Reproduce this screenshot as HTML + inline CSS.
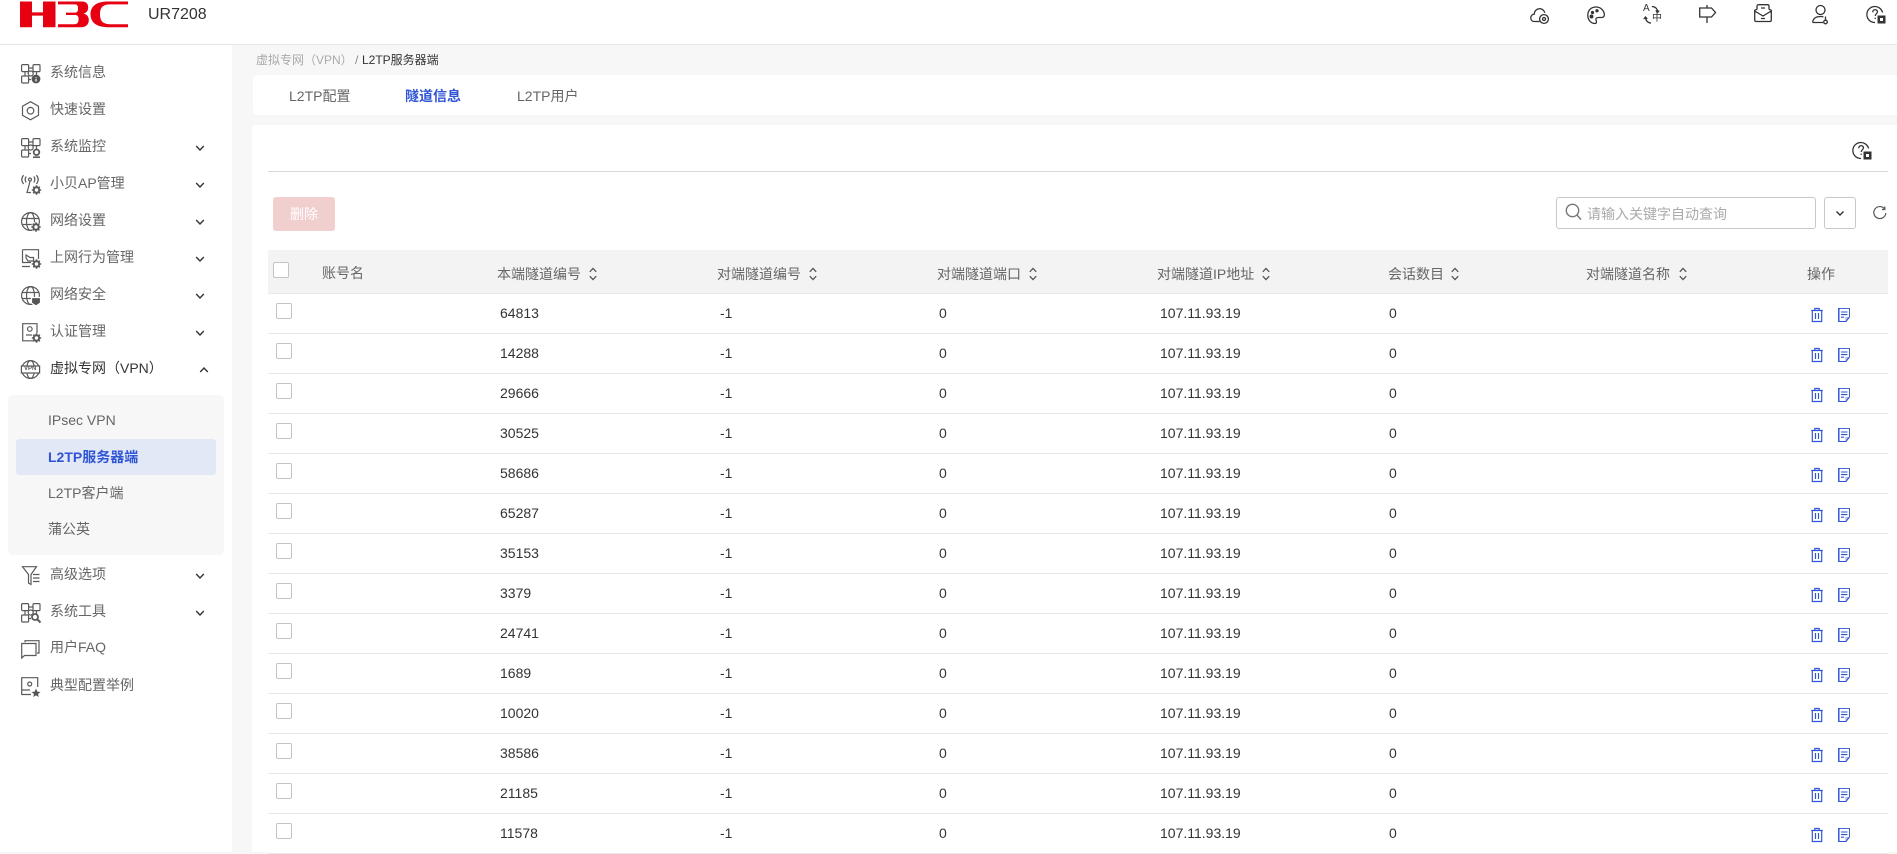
<!DOCTYPE html>
<html lang="zh"><head><meta charset="utf-8"><title>UR7208</title>
<style>
*{box-sizing:border-box}
html,body{margin:0;padding:0;width:1897px;height:852px;overflow:hidden;background:#f7f7f7;font-family:"Liberation Sans","Noto Sans CJK SC",sans-serif;font-size:14px;color:#333}
.a{position:absolute}
.t{position:absolute;white-space:nowrap;line-height:20px}
#top{left:0;top:0;width:1897px;height:45px;background:#fff;border-bottom:1px solid #e6e6e6}
#side{left:0;top:45px;width:232px;height:807px;background:#fff}
.m{color:#666;left:50px}
.s{color:#666;left:48px}
.h{color:#666}
.r{position:absolute;left:268px;width:1620px;height:40px;border-bottom:1px solid #e8e8e8;background:#fff}
.r .t{top:9px;color:#333}
.cb{position:absolute;width:16px;height:16px;border:1px solid #c4c4c4;border-radius:2px;background:#fff}
svg{position:absolute;overflow:visible;fill:none}
.i{stroke:#5a5a5a;stroke-width:1.2}
.k{stroke:#333;stroke-width:1.3}
.so{stroke:#555;stroke-width:1.3}
.b{stroke:#2f55d4;stroke-width:1.2}
</style></head><body>
<svg width="0" height="0" style="position:absolute">
<defs>
<g id="grid"><rect x=".6" y=".6" width="7" height="7" rx="1"/><rect x="12" y=".6" width="7" height="7" rx="1"/><rect x=".6" y="12" width="7" height="7" rx="1"/><circle cx="9.7" cy="9.5" r="2.5"/><path d="M7.6 4H12M4 7.6V12M15.5 7.6V11M7.6 15.5H10"/></g>
<g id="cog"><circle cx="0" cy="0" r="2.7" stroke-width="2"/><path d="M0-4.7V-3M0 3V4.7M-4.7 0H-3M3 0H4.7M-3.3-3.3L-2.2-2.2M2.2 2.2L3.3 3.3M-3.3 3.3L-2.2 2.2M2.2-2.2L3.3-3.3" stroke-width="1.6"/></g>
<g id="globe"><circle cx="9.5" cy="9.5" r="8.9"/><ellipse cx="9.5" cy="9.5" rx="4" ry="8.9"/><path d="M1 6.5H18M1 12.5H18"/></g>
<g id="chev"><path d="M-3.8-2L0 2 3.8-2" stroke="#333" stroke-width="1.4"/></g>
<g id="sort"><path d="M-3.2-2.2L0-5.6 3.2-2.2M-3.2 2.2L0 5.6 3.2 2.2" class="so"/></g>
<g id="tr"><path d="M.2 2.5H11.8M3.8 2.5V.5H8.2V2.5M1.3 2.5V13.5H10.7V2.5M4.5 5V11M7.5 5V11" class="b"/></g>
<g id="dc"><path d="M.6.6H11.4V9L8 13.4H.6Z" fill="#a9b9ee" stroke="#2f55d4" stroke-width="1.1"/><path d="M2 .9H11V9H7.4V13H2Z" fill="#fff"/><path d="M3 4H9.5M3 6.6H9.5M3 9.2H6" stroke="#2f55d4" stroke-width="1.1"/></g>
<g id="q"><path d="M15.6 7.5A8 8 0 1 0 8 17.5" stroke="#333" stroke-width="1.3"/><path d="M5.8 7.2C5.8 3.7 10.6 3.9 10.4 7 10.3 8.9 8.2 8.8 8.2 11M8.2 12.6V13.9" stroke="#333" stroke-width="1.3"/><rect x="10.5" y="10.5" width="8" height="8" fill="#333"/><rect x="13" y="13" width="3" height="3" fill="#fff"/></g>
</defs></svg>

<div id="top" class="a"></div>
<svg style="left:0;top:0" width="140" height="32">
<path fill="#e60012" d="M20 1.5H32V12.4H43V1.5H55.5V27.2H43V15.6H32V27.2H20Z"/>
<path fill="#e60012" d="M58 1.5H82C86.5 1.5 88.2 4 88.2 7.5 88.2 10.7 86.5 12.8 83.5 13.6 86.7 14.3 88.8 16.4 88.8 20 88.8 24.5 86 27.2 81 27.2H58V24.2H74.5C77 24.2 78.5 22.8 78.5 20V18C78.5 16 77 15 75 15H66V12.6H74.5C76.5 12.6 78 11.6 78 9.6V7.5C78 5.4 76.7 4.4 74.6 4.4H58Z"/>
<path fill="#e60012" d="M128 1.5V4.4H110C102 4.4 100 8.5 100 14.3 100 20 102 24.2 110 24.2H128V27.2H108C96 27.2 90.5 22 90.5 14.3 90.5 6.5 96 1.5 108 1.5Z"/>
</svg>
<div class="t" style="left:148px;top:5px;font-size:16px;color:#333">UR7208</div>

<!-- top icons -->
<svg style="left:1530px;top:6px" width="20" height="20" class="k"><path d="M6.5 15.5H4.5C-.5 15.5-.3 8.5 4.2 8.2 4.6 1.5 13.2.8 14.8 6.8"/><circle cx="14" cy="13" r="4.4"/><circle cx="14" cy="13" r="1.5"/><path d="M6.5 15.5H9.5"/></svg>
<svg style="left:1587px;top:6px" width="20" height="20" class="k"><path d="M9 1C3.5 1 .8 5 .8 9.3.8 14 4 17.5 8 17.5 10 17.5 9.5 15 9 14 8.5 12.5 9.5 11.5 11.5 11.5H14.5C17 11.5 17.8 9.5 17.2 7.3 16.2 3.5 13 1 9 1Z"/><circle cx="5.5" cy="6.5" r="1" fill="#333"/><circle cx="10" cy="4.8" r="1" fill="#333"/><circle cx="4.5" cy="10.5" r="1.3" fill="#333"/></svg>
<div class="t" style="left:1643px;top:2px;font-size:10px;line-height:14px;color:#333">A</div>
<div class="t" style="left:1652px;top:12px;font-size:10px;line-height:14px;color:#333">中</div>
<svg style="left:1642px;top:5px" width="22" height="20" class="k"><path d="M10 1.5C13 1.5 15.5 3.5 15.5 7M13.8 5.5L15.5 7.5 17.2 5.5M9 18C6.5 18 4 16.5 3.5 12.5M1.8 14L3.5 12 5.2 14"/></svg>
<svg style="left:1699px;top:5px" width="18" height="20" class="k"><path d="M.7 3H12.5L16.5 7.5 12.5 12H.7ZM8 0V3M8 12V18"/></svg>
<svg style="left:1754px;top:4px" width="18" height="20" class="k"><path d="M3 5.5V2.2C3 1.2 3.7.7 4.5.7H13.5C14.3.7 15 1.2 15 2.2V5.5M.7 7C.7 6 1.5 5.5 3 5.5M17.3 7C17.3 6 16.5 5.5 15 5.5M.7 7L9 12 17.3 7V16C17.3 17 16.7 17.5 16 17.5H2C1.3 17.5.7 17 .7 16ZM7 4H11M7 14.5H11"/></svg>
<svg style="left:1812px;top:5px" width="20" height="20" class="k"><circle cx="8.5" cy="5" r="4.5"/><path d="M.7 17.5C.7 13.5 4 11.5 8.5 11.5 9.5 11.5 10.5 11.6 11.4 11.9M.7 17.5H11"/><circle cx="13.5" cy="17" r="1.8"/><path d="M13.5 15V11.5"/></svg>
<svg style="left:1867px;top:5px" width="20" height="20"><use href="#q"/></svg>

<div id="side" class="a"></div>
<div class="a" style="left:8px;top:395px;width:216px;height:160px;background:#f7f7f7;border-radius:5px"></div>
<div class="a" style="left:16px;top:439px;width:200px;height:36px;background:#e3e8f7;border-radius:3px"></div>

<!-- sidebar text -->
<div class="t m" style="top:62px">系统信息</div>
<div class="t m" style="top:99px">快速设置</div>
<div class="t m" style="top:136px">系统监控</div>
<div class="t m" style="top:173px">小贝AP管理</div>
<div class="t m" style="top:210px">网络设置</div>
<div class="t m" style="top:247px">上网行为管理</div>
<div class="t m" style="top:284px">网络安全</div>
<div class="t m" style="top:321px">认证管理</div>
<div class="t m" style="top:358px;color:#333">虚拟专网（VPN）</div>
<div class="t s" style="top:410px">IPsec VPN</div>
<div class="t s" style="top:447px;color:#2f55d4;font-weight:bold">L2TP服务器端</div>
<div class="t s" style="top:483px">L2TP客户端</div>
<div class="t s" style="top:519px">蒲公英</div>
<div class="t m" style="top:564px">高级选项</div>
<div class="t m" style="top:601px">系统工具</div>
<div class="t m" style="top:637px">用户FAQ</div>
<div class="t m" style="top:675px">典型配置举例</div>

<!-- sidebar icons -->
<svg style="left:21px;top:64px" width="20" height="20" class="i"><use href="#grid"/><circle cx="15" cy="15" r="4.4" fill="#555" stroke="none"/><path d="M15 13V13.8M15 14.8V17.5" stroke="#fff"/></svg>
<svg style="left:21px;top:101px" width="20" height="20" class="i"><path d="M9.5.7L17.5 5.2V14.3L9.5 18.8 1.5 14.3V5.2Z"/><circle cx="9.5" cy="9.7" r="3.3"/></svg>
<svg style="left:21px;top:138px" width="20" height="20" class="i"><use href="#grid"/><circle cx="15.5" cy="14.3" r="2.8" stroke-width="1.8"/><path d="M12 19.2H19" stroke-width="1.6"/></svg>
<svg style="left:21px;top:175px" width="20" height="20" class="i"><circle cx="9" cy="4.5" r="1.5"/><path d="M5.2 1.5C3.8 3.5 3.8 5.5 5.2 7.5M12.8 1.5C14.2 3.5 14.2 5.5 12.8 7.5M2.6.2C.2 3 .2 6 2.6 9M15.4.2C17.8 3 17.8 6 15.4 9M9 6.5L6 17.5H10"/><use href="#cog" transform="translate(15.5,15)"/></svg>
<svg style="left:21px;top:212px" width="20" height="20" class="i"><use href="#globe"/><circle cx="15" cy="15" r="5" fill="#fff" stroke="none"/><use href="#cog" transform="translate(15,15)"/></svg>
<svg style="left:21px;top:249px" width="20" height="20" class="i"><path d="M1.5.7H17.5V10M1.5.7V13.5H10M1 17.5H9"/><path d="M5 6L9 8.5H12.5V12H7L5 9Z"/><use href="#cog" transform="translate(15.5,15)"/></svg>
<svg style="left:21px;top:286px" width="20" height="20" class="i"><use href="#globe"/><path d="M10.5 11.5H19.5V17L15 20 10.5 17Z" fill="#555" stroke="#fff"/></svg>
<svg style="left:22px;top:323px" width="20" height="20" class="i"><path d="M12 17.8H.7V.7H15V10"/><circle cx="7.8" cy="6" r="2.3"/><path d="M4 12H10"/><use href="#cog" transform="translate(14.5,15)"/></svg>
<svg style="left:21px;top:360px" width="20" height="20" class="i"><use href="#globe"/><rect x=".4" y="6" width="18.2" height="7" fill="#fff" stroke="#555"/></svg>
<div class="t" style="left:24px;top:365px;font-size:6px;line-height:9px;font-weight:bold;color:#555">VPN</div>
<svg style="left:22px;top:566px" width="18" height="20" class="i"><path d="M.5.7H14.5L9 8.5V18.5L6.5 17V8.5ZM11 8.5H17.5M11 12H17.5M11 15.5H17.5"/></svg>
<svg style="left:21px;top:603px" width="20" height="20" class="i"><use href="#grid"/><circle cx="14" cy="14" r="3" stroke-width="1.8"/><path d="M16 16L19.5 19.5" stroke-width="2"/></svg>
<svg style="left:21px;top:640px" width="20" height="20" class="i"><path d="M4 2.3V.7H18V13H16M.7 3.5H15V15.5H3.5L.7 18Z"/></svg>
<svg style="left:21px;top:677px" width="20" height="20" class="i"><path d="M10 17.5H.7V.7H16.7V10M.7 13H9"/><circle cx="8.7" cy="7" r="2"/><path d="M15 11.5L16.3 14.6 19.5 15 17 17 17.8 20 15 18.4 12.2 20 13 17 10.5 15 13.7 14.6Z" fill="#555" stroke="none"/></svg>

<!-- chevrons -->
<svg style="left:200px;top:148px" width="1" height="1"><use href="#chev"/></svg>
<svg style="left:200px;top:185px" width="1" height="1"><use href="#chev"/></svg>
<svg style="left:200px;top:222px" width="1" height="1"><use href="#chev"/></svg>
<svg style="left:200px;top:259px" width="1" height="1"><use href="#chev"/></svg>
<svg style="left:200px;top:296px" width="1" height="1"><use href="#chev"/></svg>
<svg style="left:200px;top:333px" width="1" height="1"><use href="#chev"/></svg>
<svg style="left:204px;top:370px" width="1" height="1"><use href="#chev" transform="scale(1,-1)"/></svg>
<svg style="left:200px;top:576px" width="1" height="1"><use href="#chev"/></svg>
<svg style="left:200px;top:613px" width="1" height="1"><use href="#chev"/></svg>

<!-- breadcrumb -->
<div class="t" style="left:256px;top:50px;font-size:12px;color:#aaa">虚拟专网（VPN）</div>
<div class="t" style="left:355px;top:50px;font-size:12px;color:#888">/</div>
<div class="t" style="left:362px;top:50px;font-size:12px;color:#333">L2TP服务器端</div>

<!-- tabs -->
<div class="a" style="left:253px;top:75px;width:1644px;height:40px;background:#fff;border-radius:4px 0 0 4px"></div>
<div class="t h" style="left:289px;top:86px">L2TP配置</div>
<div class="t" style="left:405px;top:86px;color:#2f55d4;font-weight:bold">隧道信息</div>
<div class="t h" style="left:517px;top:86px">L2TP用户</div>

<!-- panel -->
<div class="a" style="left:252px;top:125px;width:1645px;height:727px;background:#fff;border-radius:4px 0 0 0"></div>
<svg style="left:1853px;top:141px" width="20" height="20"><use href="#q"/></svg>
<div class="a" style="left:268px;top:171px;width:1620px;height:1px;background:#d9d9d9"></div>

<div class="a" style="left:273px;top:197px;width:62px;height:34px;background:#f2cfcf;border-radius:3px"></div>
<div class="t" style="left:290px;top:204px;font-size:14px;color:#fff">删除</div>

<div class="a" style="left:1556px;top:197px;width:260px;height:32px;border:1px solid #c8c8c8;border-radius:3px;background:#fff"></div>
<svg style="left:1565px;top:203px" width="18" height="20" stroke="#777" stroke-width="1.4"><circle cx="7.5" cy="7.5" r="6.2"/><path d="M12 12L16 16.5"/></svg>
<div class="t" style="left:1587px;top:204px;font-size:14px;color:#aaa">请输入关键字自动查询</div>
<div class="a" style="left:1824px;top:197px;width:32px;height:32px;border:1px solid #c8c8c8;border-radius:3px;background:#fff"></div>
<svg style="left:1840px;top:213px" width="1" height="1"><path d="M-3.5-1.5L0 2 3.5-1.5" stroke="#333" stroke-width="1.4"/></svg>
<svg style="left:1873px;top:206px" width="14" height="14" stroke="#555" stroke-width="1.2"><path d="M11.5 2.8A6 6 0 1 0 12.8 7M11.8.5V3.5H9"/></svg>

<!-- table header -->
<div class="a" style="left:268px;top:250px;width:1620px;height:44px;background:#f3f3f3;border-bottom:1px solid #e8e8e8"></div>
<div class="cb" style="left:273px;top:262px"></div>
<div class="t h" style="left:322px;top:263px">账号名</div>
<div class="t h" style="left:497px;top:264px">本端隧道编号</div><svg style="left:593px;top:274px" width="1" height="1"><use href="#sort"/></svg>
<div class="t h" style="left:717px;top:264px">对端隧道编号</div><svg style="left:813px;top:274px" width="1" height="1"><use href="#sort"/></svg>
<div class="t h" style="left:937px;top:264px">对端隧道端口</div><svg style="left:1033px;top:274px" width="1" height="1"><use href="#sort"/></svg>
<div class="t h" style="left:1157px;top:264px">对端隧道IP地址</div><svg style="left:1266px;top:274px" width="1" height="1"><use href="#sort"/></svg>
<div class="t h" style="left:1388px;top:264px">会话数目</div><svg style="left:1455px;top:274px" width="1" height="1"><use href="#sort"/></svg>
<div class="t h" style="left:1586px;top:264px">对端隧道名称</div><svg style="left:1683px;top:274px" width="1" height="1"><use href="#sort"/></svg>
<div class="t h" style="left:1807px;top:264px">操作</div>

<!-- rows -->
<div class="r" style="top:294px"><div class="cb" style="left:8px;top:9px"></div><div class="t" style="left:232px">64813</div><div class="t" style="left:452px">-1</div><div class="t" style="left:671px">0</div><div class="t" style="left:892px">107.11.93.19</div><div class="t" style="left:1121px">0</div><svg style="left:1543px;top:14px" width="12" height="14"><use href="#tr"/></svg><svg style="left:1570px;top:14px" width="12" height="14"><use href="#dc"/></svg></div>
<div class="r" style="top:334px"><div class="cb" style="left:8px;top:9px"></div><div class="t" style="left:232px">14288</div><div class="t" style="left:452px">-1</div><div class="t" style="left:671px">0</div><div class="t" style="left:892px">107.11.93.19</div><div class="t" style="left:1121px">0</div><svg style="left:1543px;top:14px" width="12" height="14"><use href="#tr"/></svg><svg style="left:1570px;top:14px" width="12" height="14"><use href="#dc"/></svg></div>
<div class="r" style="top:374px"><div class="cb" style="left:8px;top:9px"></div><div class="t" style="left:232px">29666</div><div class="t" style="left:452px">-1</div><div class="t" style="left:671px">0</div><div class="t" style="left:892px">107.11.93.19</div><div class="t" style="left:1121px">0</div><svg style="left:1543px;top:14px" width="12" height="14"><use href="#tr"/></svg><svg style="left:1570px;top:14px" width="12" height="14"><use href="#dc"/></svg></div>
<div class="r" style="top:414px"><div class="cb" style="left:8px;top:9px"></div><div class="t" style="left:232px">30525</div><div class="t" style="left:452px">-1</div><div class="t" style="left:671px">0</div><div class="t" style="left:892px">107.11.93.19</div><div class="t" style="left:1121px">0</div><svg style="left:1543px;top:14px" width="12" height="14"><use href="#tr"/></svg><svg style="left:1570px;top:14px" width="12" height="14"><use href="#dc"/></svg></div>
<div class="r" style="top:454px"><div class="cb" style="left:8px;top:9px"></div><div class="t" style="left:232px">58686</div><div class="t" style="left:452px">-1</div><div class="t" style="left:671px">0</div><div class="t" style="left:892px">107.11.93.19</div><div class="t" style="left:1121px">0</div><svg style="left:1543px;top:14px" width="12" height="14"><use href="#tr"/></svg><svg style="left:1570px;top:14px" width="12" height="14"><use href="#dc"/></svg></div>
<div class="r" style="top:494px"><div class="cb" style="left:8px;top:9px"></div><div class="t" style="left:232px">65287</div><div class="t" style="left:452px">-1</div><div class="t" style="left:671px">0</div><div class="t" style="left:892px">107.11.93.19</div><div class="t" style="left:1121px">0</div><svg style="left:1543px;top:14px" width="12" height="14"><use href="#tr"/></svg><svg style="left:1570px;top:14px" width="12" height="14"><use href="#dc"/></svg></div>
<div class="r" style="top:534px"><div class="cb" style="left:8px;top:9px"></div><div class="t" style="left:232px">35153</div><div class="t" style="left:452px">-1</div><div class="t" style="left:671px">0</div><div class="t" style="left:892px">107.11.93.19</div><div class="t" style="left:1121px">0</div><svg style="left:1543px;top:14px" width="12" height="14"><use href="#tr"/></svg><svg style="left:1570px;top:14px" width="12" height="14"><use href="#dc"/></svg></div>
<div class="r" style="top:574px"><div class="cb" style="left:8px;top:9px"></div><div class="t" style="left:232px">3379</div><div class="t" style="left:452px">-1</div><div class="t" style="left:671px">0</div><div class="t" style="left:892px">107.11.93.19</div><div class="t" style="left:1121px">0</div><svg style="left:1543px;top:14px" width="12" height="14"><use href="#tr"/></svg><svg style="left:1570px;top:14px" width="12" height="14"><use href="#dc"/></svg></div>
<div class="r" style="top:614px"><div class="cb" style="left:8px;top:9px"></div><div class="t" style="left:232px">24741</div><div class="t" style="left:452px">-1</div><div class="t" style="left:671px">0</div><div class="t" style="left:892px">107.11.93.19</div><div class="t" style="left:1121px">0</div><svg style="left:1543px;top:14px" width="12" height="14"><use href="#tr"/></svg><svg style="left:1570px;top:14px" width="12" height="14"><use href="#dc"/></svg></div>
<div class="r" style="top:654px"><div class="cb" style="left:8px;top:9px"></div><div class="t" style="left:232px">1689</div><div class="t" style="left:452px">-1</div><div class="t" style="left:671px">0</div><div class="t" style="left:892px">107.11.93.19</div><div class="t" style="left:1121px">0</div><svg style="left:1543px;top:14px" width="12" height="14"><use href="#tr"/></svg><svg style="left:1570px;top:14px" width="12" height="14"><use href="#dc"/></svg></div>
<div class="r" style="top:694px"><div class="cb" style="left:8px;top:9px"></div><div class="t" style="left:232px">10020</div><div class="t" style="left:452px">-1</div><div class="t" style="left:671px">0</div><div class="t" style="left:892px">107.11.93.19</div><div class="t" style="left:1121px">0</div><svg style="left:1543px;top:14px" width="12" height="14"><use href="#tr"/></svg><svg style="left:1570px;top:14px" width="12" height="14"><use href="#dc"/></svg></div>
<div class="r" style="top:734px"><div class="cb" style="left:8px;top:9px"></div><div class="t" style="left:232px">38586</div><div class="t" style="left:452px">-1</div><div class="t" style="left:671px">0</div><div class="t" style="left:892px">107.11.93.19</div><div class="t" style="left:1121px">0</div><svg style="left:1543px;top:14px" width="12" height="14"><use href="#tr"/></svg><svg style="left:1570px;top:14px" width="12" height="14"><use href="#dc"/></svg></div>
<div class="r" style="top:774px"><div class="cb" style="left:8px;top:9px"></div><div class="t" style="left:232px">21185</div><div class="t" style="left:452px">-1</div><div class="t" style="left:671px">0</div><div class="t" style="left:892px">107.11.93.19</div><div class="t" style="left:1121px">0</div><svg style="left:1543px;top:14px" width="12" height="14"><use href="#tr"/></svg><svg style="left:1570px;top:14px" width="12" height="14"><use href="#dc"/></svg></div>
<div class="r" style="top:814px"><div class="cb" style="left:8px;top:9px"></div><div class="t" style="left:232px">11578</div><div class="t" style="left:452px">-1</div><div class="t" style="left:671px">0</div><div class="t" style="left:892px">107.11.93.19</div><div class="t" style="left:1121px">0</div><svg style="left:1543px;top:14px" width="12" height="14"><use href="#tr"/></svg><svg style="left:1570px;top:14px" width="12" height="14"><use href="#dc"/></svg></div>
</body></html>
